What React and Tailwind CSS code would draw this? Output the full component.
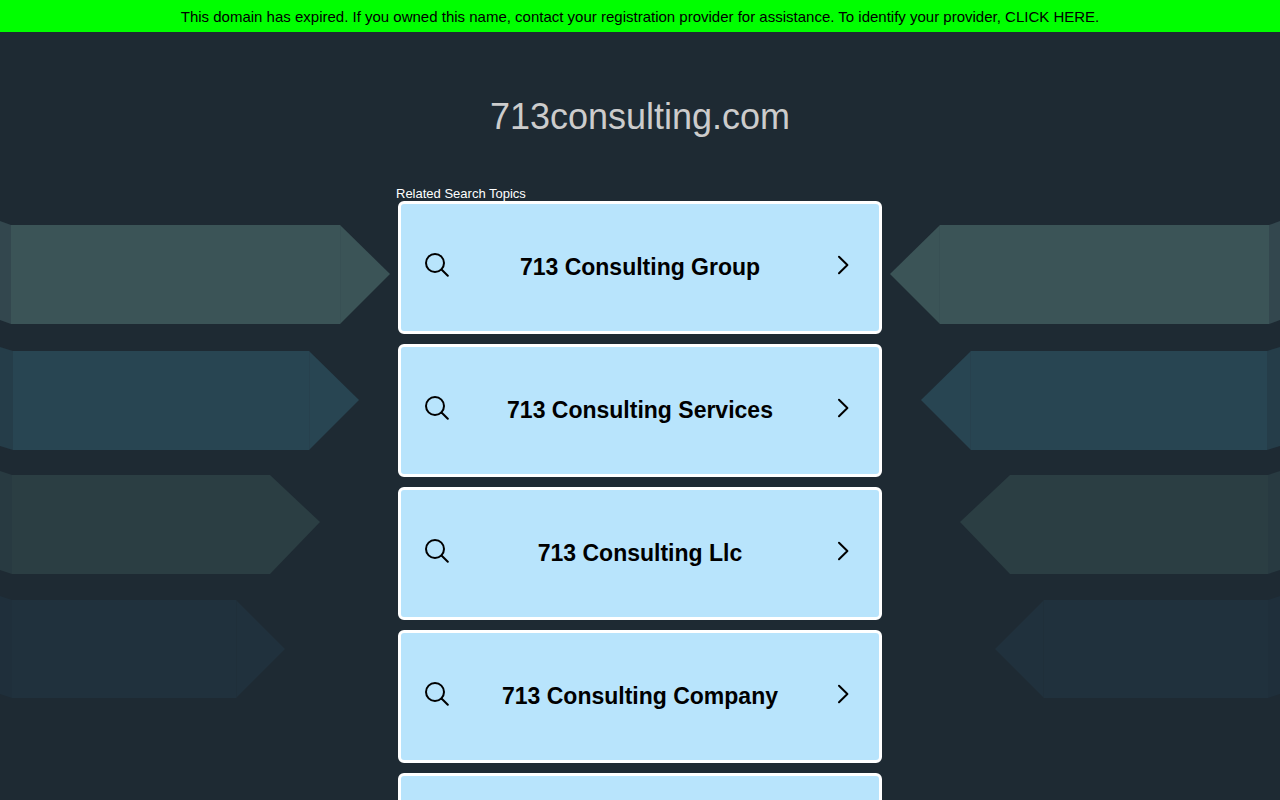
import React from 'react'

const topics = [
  '713 Consulting Group',
  '713 Consulting Services',
  '713 Consulting Llc',
  '713 Consulting Company',
]

// Ribbons, drawn for the left side; the right side is mirrored
const ribbons = [
  { top: 225, mid: 274, bottom: 324, fold: 11, neck: 340, tip: 390, color: '#3b5457', side: '#33474e', edge: '#385054' },
  { top: 351, mid: 400, bottom: 450, fold: 13, neck: 309, tip: 359, color: '#284552', side: '#253d49', edge: '#27414e' },
  { top: 475, mid: 522, bottom: 574, fold: 12, neck: 270, tip: 320, color: '#2b3e43', side: '#283a41', edge: '#2b3e43' },
  { top: 600, mid: 649, bottom: 698, fold: 12, neck: 236, tip: 285, color: '#20313d', side: '#1f2f3b', edge: '#1f2f3a' },
]

const Ribbons = ({ className }) => (
  <svg className={className} width="400" height="800" viewBox="0 0 400 800" aria-hidden="true">
    {ribbons.map((r) => (
      <g key={r.top}>
        <polygon
          fill={r.side}
          points={`0,${r.top - 4} ${r.fold},${r.top} ${r.fold},${r.bottom} 0,${r.bottom - 4}`}
        />
        <polygon
          fill={r.color}
          points={`${r.fold},${r.top} ${r.neck},${r.top} ${r.tip},${r.mid} ${r.neck},${r.bottom} ${r.fold},${r.bottom}`}
        />
        <path stroke={r.edge} d={`M${r.neck + 0.5} ${r.top + 1}V${r.bottom - 1}`} />
      </g>
    ))}
  </svg>
)

const SearchIcon = () => (
  <svg className="shrink-0" width="24" height="24" viewBox="0 0 24 24" fill="none" stroke="#000" strokeWidth="2" strokeLinecap="round" aria-hidden="true">
    <circle cx="10" cy="10" r="9" />
    <path d="M16.5 16.5L22.8 22.8" />
  </svg>
)

const ChevronIcon = () => (
  <svg className="shrink-0" width="12" height="20" viewBox="0 0 12 20" fill="none" stroke="#000" strokeWidth="2" strokeLinecap="round" strokeLinejoin="round" aria-hidden="true">
    <path d="M2 1.8L10.4 10L2 18.2" />
  </svg>
)

const TopicCard = ({ label }) => (
  <a
    href="#"
    className="flex h-[133px] items-center rounded-md border-3 border-white bg-[#b8e4fc] pr-[30px] pb-[2px] pl-6 text-black"
  >
    <span className="pb-1">
      <SearchIcon />
    </span>
    <span className="flex-1 pr-[6px] text-center text-[23px] leading-7 font-bold">{label}</span>
    <span className="pb-1">
      <ChevronIcon />
    </span>
  </a>
)

export default function App() {
  return (
    <div className="relative h-screen overflow-hidden bg-[#1e2a33] font-['Liberation_Sans',Arial,sans-serif]">
      <Ribbons className="absolute top-0 left-0" />
      <Ribbons className="absolute top-0 right-0 -scale-x-100" />

      <div className="relative">
        <a href="#" className="block h-8 bg-[#00ff00] pt-[5px] text-center text-[15px] leading-6 text-black">
          This domain has expired. If you owned this name, contact your registration provider for assistance. To identify
          your provider, CLICK HERE.
        </a>

        <h1 className="pt-16 text-center text-[36px] leading-[42px] text-[#cccccc]">713consulting.com</h1>

        <main className="mx-auto w-[488px] pt-12">
          <h2 className="text-[13px] leading-[15px] text-white">Related Search Topics</h2>
          <nav className="flex flex-col gap-[10px] px-[2px]">
            {topics.map((topic) => (
              <TopicCard key={topic} label={topic} />
            ))}
            <div className="h-[133px] rounded-md border-3 border-white bg-[#b8e4fc]" />
          </nav>
        </main>
      </div>
    </div>
  )
}
